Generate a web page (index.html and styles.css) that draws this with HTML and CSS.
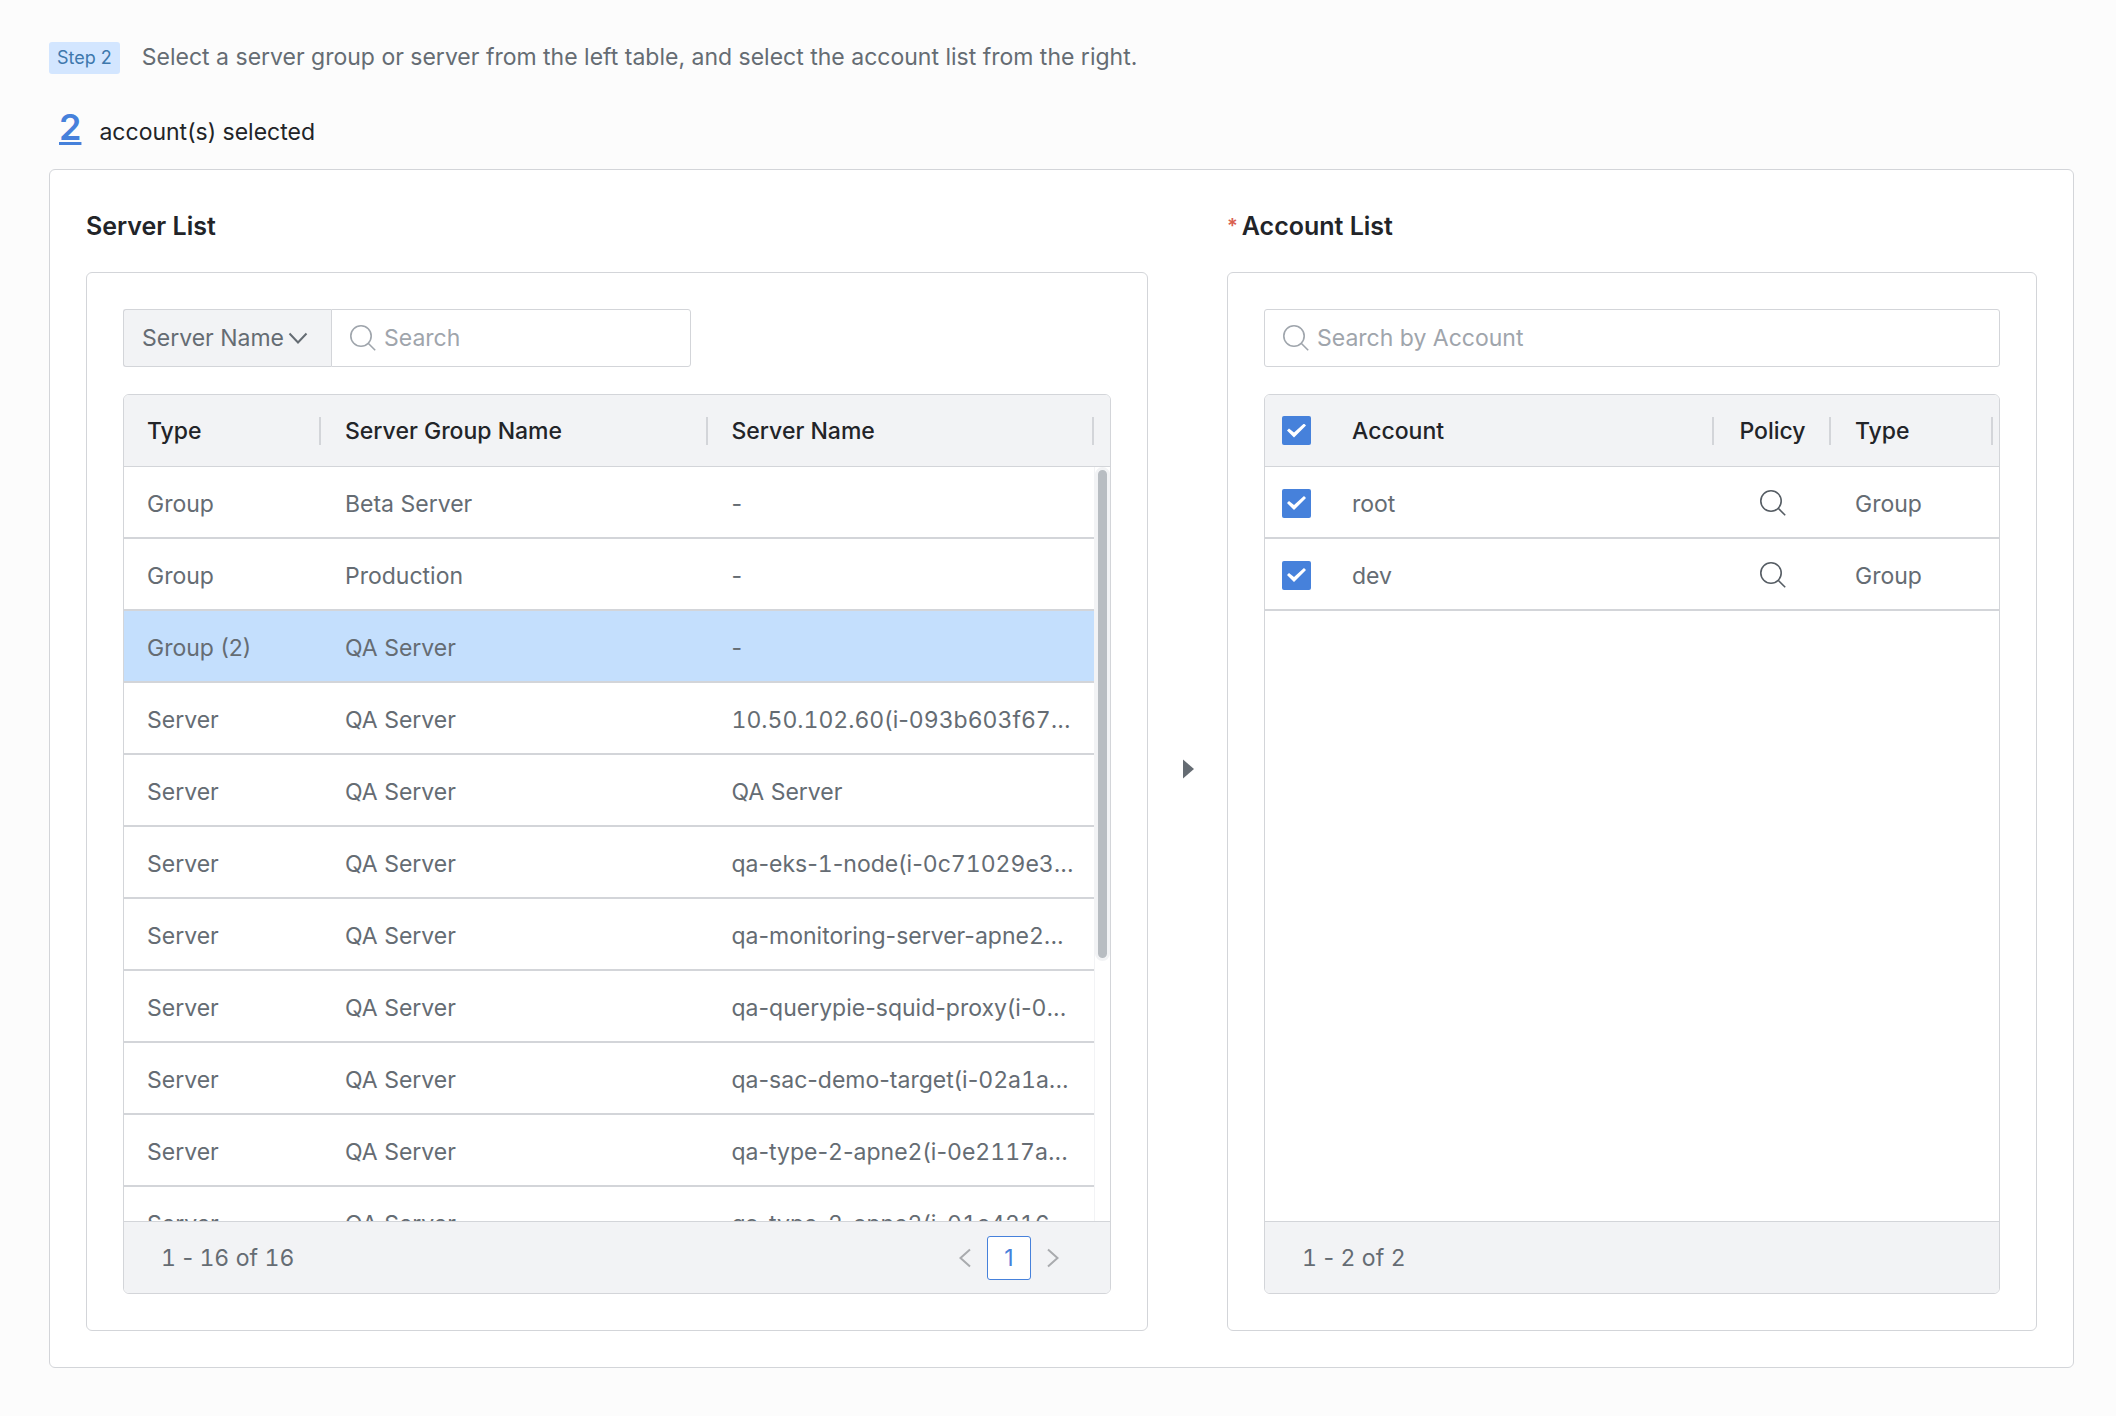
FILE: index.html
```html
<!DOCTYPE html>
<html lang="en">
<head>
<meta charset="utf-8">
<meta name="viewport" content="width=device-width, initial-scale=1">
<title>Select Accounts</title>
<link rel="stylesheet" href="styles.css">
</head>
<body>
<svg class="sprite" aria-hidden="true">
  <symbol id="icon-search" viewBox="0 0 26 26">
    <circle cx="11" cy="11" r="10.200"/>
    <path d="M18.200 18.200 25.200 25.200"/>
  </symbol>
</svg>
<main class="page">
  <header class="step">
    <span class="step-badge">Step 2</span>
    <p class="step-text">Select a server group or server from the left table, and select the account list from the right.</p>
  </header>
  <p class="selected"><a class="selected-count" href="#accounts">2</a><span>account(s) selected</span></p>

  <div class="transfer">
    <section class="panel">
      <h2 class="panel-title">Server List</h2>
      <div class="panel-card">
        <div class="filter">
          <div class="filter-select">
            <select aria-label="Search field">
              <option>Server Name</option>
            </select>
            <svg class="chevron" viewBox="0 0 20 12" aria-hidden="true"><path d="M1.500 1.500 10 10.500 18.500 1.500"/></svg>
          </div>
          <label class="search">
            <svg class="search-icon" aria-hidden="true"><use href="#icon-search"/></svg>
            <input type="text" placeholder="Search" aria-label="Search servers">
          </label>
        </div>
        <div class="grid">
          <div class="grid-view">
            <table>
              <colgroup><col class="col-type"><col><col><col class="col-scroll"></colgroup>
              <thead>
                <tr><th>Type</th><th>Server Group Name</th><th>Server Name</th><td class="gutter"></td></tr>
              </thead>
              <tbody>
                <tr><td>Group</td><td>Beta Server</td><td>-</td></tr>
                <tr><td>Group</td><td>Production</td><td>-</td></tr>
                <tr class="is-selected"><td>Group (2)</td><td>QA Server</td><td>-</td></tr>
                <tr><td>Server</td><td>QA Server</td><td><span class="num">10.50.102.60</span>(i-<span class="num">093b603f67</span>...</td></tr>
                <tr><td>Server</td><td>QA Server</td><td>QA Server</td></tr>
                <tr><td>Server</td><td>QA Server</td><td>qa-eks-<span class="num">1</span>-node(i-<span class="num">0c71029e3</span>...</td></tr>
                <tr><td>Server</td><td>QA Server</td><td>qa-monitoring-server-apne<span class="num">2</span>...</td></tr>
                <tr><td>Server</td><td>QA Server</td><td>qa-querypie-squid-proxy(i-<span class="num">0</span>...</td></tr>
                <tr><td>Server</td><td>QA Server</td><td>qa-sac-demo-target(i-<span class="num">02a1a</span>...</td></tr>
                <tr><td>Server</td><td>QA Server</td><td>qa-type-<span class="num">2</span>-apne<span class="num">2</span>(i-<span class="num">0e2117a</span>...</td></tr>
                <tr><td>Server</td><td>QA Server</td><td>qa-type-<span class="num">2</span>-apne<span class="num">2</span>(i-<span class="num">01c4216</span>...</td></tr>
              </tbody>
            </table>
            <div class="scrollbar"><div class="scrollbar-thumb"></div></div>
          </div>
          <footer class="grid-footer">
            <span><span class="num">1</span> - <span class="num">16</span> of <span class="num">16</span></span>
            <nav class="pager" aria-label="Pages">
              <button type="button" class="pager-arrow" aria-label="Previous page"><svg viewBox="0 0 12 20" aria-hidden="true"><path d="M11 1.500 1.500 10 11 18.500"/></svg></button>
              <button type="button" class="pager-page">1</button>
              <button type="button" class="pager-arrow" aria-label="Next page"><svg viewBox="0 0 12 20" aria-hidden="true"><path d="M1 1.500 10.500 10 1 18.500"/></svg></button>
            </nav>
          </footer>
        </div>
      </div>
    </section>

    <svg class="transfer-arrow" viewBox="0 0 12 20" aria-hidden="true"><path d="M1 0.500 12 10 1 19.500Z"/></svg>

    <section class="panel" id="accounts">
      <h2 class="panel-title"><span class="required">*</span>Account List</h2>
      <div class="panel-card">
        <label class="search search-full">
          <svg class="search-icon" aria-hidden="true"><use href="#icon-search"/></svg>
          <input type="text" placeholder="Search by Account" aria-label="Search by Account">
        </label>
        <div class="grid">
          <div class="grid-view">
            <table>
              <colgroup><col class="col-check"><col><col class="col-policy"><col class="col-kind"><col class="col-rest"></colgroup>
              <thead>
                <tr><td class="check"><input type="checkbox" aria-label="Select all accounts" checked></td><th>Account</th><th class="policy">Policy</th><th>Type</th><td class="gutter"></td></tr>
              </thead>
              <tbody>
                <tr><td class="check"><input type="checkbox" aria-label="Select root" checked></td><td>root</td><td class="policy"><button type="button" aria-label="View policy of root"><svg class="search-icon" aria-hidden="true"><use href="#icon-search"/></svg></button></td><td>Group</td><td class="gutter"></td></tr>
                <tr><td class="check"><input type="checkbox" aria-label="Select dev" checked></td><td>dev</td><td class="policy"><button type="button" aria-label="View policy of dev"><svg class="search-icon" aria-hidden="true"><use href="#icon-search"/></svg></button></td><td>Group</td><td class="gutter"></td></tr>
              </tbody>
            </table>
          </div>
          <footer class="grid-footer">
            <span><span class="num">1</span> - <span class="num">2</span> of <span class="num">2</span></span>
          </footer>
        </div>
      </div>
    </section>
  </div>
</main>
</body>
</html>
```
FILE: styles.css
```css
:root {
  --line: #d3d5d9;
  --text: #656c73;
  --strong: #222428;
  --muted: #9fa5ac;
  --fill: #f2f3f5;
  --blue: #4681db;
}

* {
  box-sizing: border-box;
}

body {
  margin: 0;
  background: #fcfcfc;
  color: var(--text);
  font: 23px/32px Inter, "Liberation Sans", sans-serif;
}

input,
select,
button {
  margin: 0;
  color: inherit;
  font: inherit;
}

button {
  padding: 0;
  border: 0;
  background: none;
}

.num {
  font-variant-numeric: tabular-nums;
}

.sprite {
  display: none;
}

.page {
  padding: 42px 42px 46px 49px;
}

.step {
  display: flex;
  gap: 22px;
}

.step-badge {
  padding: 0 8px;
  border-radius: 3px;
  background: #d3e6ff;
  color: #3e78ad;
  font-size: 18px;
}

.step-text {
  margin: 0;
  line-height: 30px;
}

.selected {
  display: flex;
  align-items: baseline;
  gap: 18px;
  margin: 31px 0 15px;
  padding-left: 10px;
  color: var(--strong);
  line-height: 44px;
}

.selected-count {
  color: var(--blue);
  font-size: 36px;
  font-weight: 600;
}

.transfer {
  display: grid;
  grid-template-columns: 59fr 79px 45fr;
  align-items: center;
  justify-items: center;
  padding: 36px;
  border: 1px solid var(--line);
  border-radius: 6px;
  background: #fff;
}

.transfer-arrow {
  width: 12px;
  height: 20px;
  fill: var(--text);
}

.panel {
  width: 100%;
  min-width: 0;
}

.panel-title {
  display: flex;
  gap: 4px;
  margin: 0 0 26px;
  color: var(--strong);
  font-size: 25px;
  font-weight: 600;
  line-height: 40px;
}

.required {
  color: #d9604f;
  font-size: 20px;
}

.panel-card {
  padding: 36px;
  border: 1px solid var(--line);
  border-radius: 6px;
}

.filter {
  display: flex;
  max-width: 568px;
}

.filter-select {
  position: relative;
  flex: none;
  width: 208px;
}

.filter-select select {
  width: 100%;
  height: 58px;
  padding: 0 18px;
  border: 1px solid var(--line);
  border-right: 0;
  border-radius: 3px 0 0 3px;
  background: var(--fill);
  appearance: none;
}

.chevron {
  position: absolute;
  top: 23px;
  right: 23px;
  width: 20px;
  height: 12px;
  fill: none;
  stroke: var(--text);
  stroke-width: 2;
  pointer-events: none;
}

.search {
  display: flex;
  flex: 1;
  align-items: center;
  gap: 8px;
  min-width: 0;
  height: 58px;
  padding: 0 18px;
  border: 1px solid var(--line);
  border-radius: 0 3px 3px 0;
}

.search-full {
  border-radius: 3px;
}

.search input {
  flex: 1;
  min-width: 0;
  padding: 0;
  border: 0;
  outline: 0;
  background: none;
}

.search input::placeholder {
  color: var(--muted);
  opacity: 1;
}

.search-icon {
  flex: none;
  width: 26px;
  height: 26px;
  fill: none;
  stroke: var(--muted);
  stroke-width: 1.6;
}

.grid {
  margin-top: 27px;
  overflow: hidden;
  border: 1px solid var(--line);
  border-radius: 6px;
}

.grid-view {
  position: relative;
  height: 826px;
  overflow: hidden;
}

table {
  width: 100%;
  border-spacing: 0;
  table-layout: fixed;
}

.col-type {
  width: 197px;
}

.col-scroll {
  width: 16px;
}

.col-check {
  width: 63px;
}

.col-policy {
  width: 117px;
}

.col-kind {
  width: 162px;
}

.col-rest {
  width: 6px;
}

th,
td {
  height: 72px;
  padding: 0 16px 0 23px;
  overflow: hidden;
  text-align: left;
  text-overflow: ellipsis;
  white-space: nowrap;
}

th:not(:first-child),
td:not(:first-child) {
  padding-left: 24px;
}

thead th,
thead td {
  border-bottom: 1px solid var(--line);
  background: var(--fill);
}

thead th {
  background: linear-gradient(var(--line), var(--line)) right center / 2px 28px no-repeat var(--fill);
  color: var(--strong);
  font-weight: 500;
}

tbody td {
  padding-top: 2px;
  box-shadow: inset 0 -2px var(--line);
}

.is-selected td {
  background: #c4dffd;
}

tr > td.gutter:last-child {
  padding: 0;
}

td.check {
  padding: 0 17px;
}

tr > th.policy:nth-child(3),
tr > td.policy:nth-child(3) {
  padding: 0;
  text-align: center;
}

.policy button {
  display: block;
  width: 26px;
  height: 26px;
  margin: 0 auto;
}

.policy .search-icon {
  display: block;
  stroke: #565d64;
}

input[type="checkbox"] {
  display: grid;
  place-items: center;
  width: 29px;
  height: 29px;
  border-radius: 2px;
  background: var(--blue);
  appearance: none;
}

input[type="checkbox"]::after {
  width: 19px;
  height: 14px;
  background: #fff;
  clip-path: polygon(0 7px, 2px 5px, 7px 9px, 17px 0, 19px 2px, 7px 14px);
  content: "";
}

.scrollbar {
  position: absolute;
  top: 72px;
  right: 0;
  bottom: 0;
  width: 16px;
  border-left: 1px solid var(--fill);
}

.scrollbar-thumb {
  height: 494px;
  border: 3px solid var(--fill);
  border-radius: 8px;
  background: #b8bdc2;
}

.grid-footer {
  display: flex;
  align-items: center;
  justify-content: space-between;
  height: 72px;
  padding: 0 51px 0 37px;
  border-top: 1px solid var(--line);
  background: var(--fill);
}

.pager {
  display: flex;
  align-items: center;
  gap: 16px;
}

.pager-arrow svg {
  display: block;
  width: 12px;
  height: 20px;
  fill: none;
  stroke: #a9abae;
  stroke-width: 2;
}

.pager-page {
  width: 44px;
  height: 44px;
  border: 1px solid var(--blue);
  border-radius: 3px;
  background: #fff;
  color: var(--blue);
}
```
